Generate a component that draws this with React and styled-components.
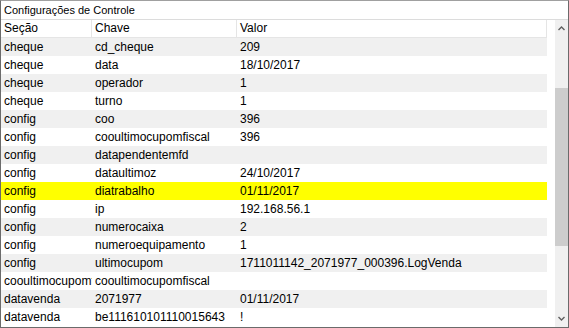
import styled, { createGlobalStyle } from "styled-components";

const GlobalStyle = createGlobalStyle`
  html, body {
    margin: 0;
    padding: 0;
    background: #ffffff;
  }
`;

const rows = [
  ["cheque", "cd_cheque", "209"],
  ["cheque", "data", "18/10/2017"],
  ["cheque", "operador", "1"],
  ["cheque", "turno", "1"],
  ["config", "coo", "396"],
  ["config", "cooultimocupomfiscal", "396"],
  ["config", "datapendentemfd", ""],
  ["config", "dataultimoz", "24/10/2017"],
  ["config", "diatrabalho", "01/11/2017"],
  ["config", "ip", "192.168.56.1"],
  ["config", "numerocaixa", "2"],
  ["config", "numeroequipamento", "1"],
  ["config", "ultimocupom", "1711011142_2071977_000396.LogVenda"],
  ["cooultimocupomfiscal", "cooultimocupomfiscal", ""],
  ["datavenda", "2071977", "01/11/2017"],
  ["datavenda", "be111610101110015643", "!"],
];

const SELECTED = 8;

const Window = styled.div`
  width: 569px;
  height: 328px;
  box-sizing: border-box;
  border: 1px solid #6b6b6b;
  border-top-color: #a0a0a0;
  display: flex;
  flex-direction: column;
  overflow: hidden;
  font-family: "Liberation Sans", Arial, sans-serif;
  color: #000;
`;

const Title = styled.div`
  height: 18px;
  flex: none;
  border-bottom: 1px solid #dcdcdc;
  padding-left: 3px;
  font-size: 11px;
  line-height: 18px;
`;

const Body = styled.div`
  flex: 1;
  display: flex;
  overflow: hidden;
`;

const Table = styled.div`
  width: 546px;
  flex: none;
  display: flex;
  flex-direction: column;
`;

const Row = styled.div`
  display: grid;
  grid-template-columns: 91px 145px 1fr;
  height: 18px;
  flex: none;
  font-size: 12px;
  line-height: 18px;
  background: ${(p) => (p.$selected ? "#ffff00" : p.$alt ? "#f0f0f0" : "#ffffff")};
`;

const HeaderRow = styled(Row)`
  height: 17px;
  line-height: 17px;
  border-bottom: 1px solid #e5e5e5;
  border-right: 1px solid #e5e5e5;
  background: #ffffff;
`;

const Cell = styled.div`
  padding-left: 3px;
  white-space: nowrap;
  overflow: hidden;
`;

const HeadCell = styled(Cell)`
  border-right: ${(p) => (p.$last ? "none" : "1px solid #e5e5e5")};
`;

const Gap = styled.div`
  width: 8px;
  flex: none;
`;

const ScrollBar = styled.div`
  width: 13px;
  flex: none;
  background: #f0f0f0;
  display: flex;
  flex-direction: column;
  align-items: center;
`;

const Arrow = styled.div`
  height: 17px;
  width: 100%;
  flex: none;
  display: flex;
  align-items: center;
  justify-content: center;
`;

const Track = styled.div`
  flex: 1;
  width: 100%;
  display: flex;
  flex-direction: column;
`;

const Thumb = styled.div`
  width: 100%;
  background: #cdcdcd;
  margin-top: 51px;
  height: 158px;
`;

function Chevron({ up }) {
  return (
    <svg width="7" height="5" viewBox="0 0 7 5">
      <path
        d={up ? "M0.5 4 L3.5 1 L6.5 4" : "M0.5 1 L3.5 4 L6.5 1"}
        fill="none"
        stroke="#606060"
        strokeWidth="1.4"
      />
    </svg>
  );
}

export default function App() {
  return (
    <>
      <GlobalStyle />
      <Window>
        <Title>Configurações de Controle</Title>
        <Body>
          <Table>
            <HeaderRow>
              <HeadCell>Seção</HeadCell>
              <HeadCell>Chave</HeadCell>
              <HeadCell $last>Valor</HeadCell>
            </HeaderRow>
            {rows.map((r, i) => (
              <Row key={i} $alt={i % 2 === 0} $selected={i === SELECTED}>
                <Cell>{r[0]}</Cell>
                <Cell>{r[1]}</Cell>
                <Cell>{r[2]}</Cell>
              </Row>
            ))}
          </Table>
          <Gap />
          <ScrollBar>
            <Arrow>
              <Chevron up />
            </Arrow>
            <Track>
              <Thumb />
            </Track>
            <Arrow>
              <Chevron />
            </Arrow>
          </ScrollBar>
        </Body>
      </Window>
    </>
  );
}
